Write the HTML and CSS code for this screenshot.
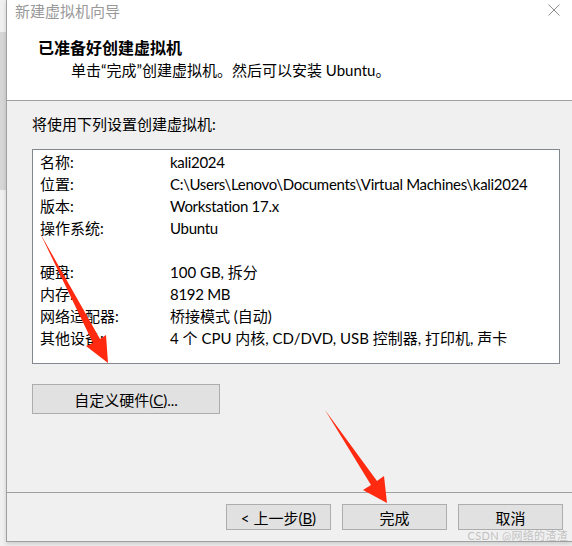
FILE: index.html
```html
<!DOCTYPE html>
<html lang="zh-CN">
<head>
    <meta charset="UTF-8">
    <title>新建虚拟机向导</title>
    <link rel="stylesheet" href="styles.css">
</head>
<body>

<div class="screen">
    <div class="side">
        <div class="side-bar"></div>
    </div>

    <div class="wizard">
        <div class="titlebar">
            <span class="title">新建虚拟机向导</span>
            <svg class="close" width="12" height="12" viewBox="0 0 12 12">
                <path d="M0.5 0.5 L11.5 11.5 M11.5 0.5 L0.5 11.5" stroke="#8a8a8a" stroke-width="1" fill="none"/>
            </svg>
        </div>

        <div class="header">
            <div class="header-title">已准备好创建虚拟机</div>
            <div class="header-sub">单击“完成”创建虚拟机。然后可以安装 Ubuntu。</div>
        </div>

        <div class="content">
            <div class="intro">将使用下列设置创建虚拟机:</div>
            <div class="summary">
                <div class="row"><span class="key">名称:</span><span class="latin">kali2024</span></div>
                <div class="row"><span class="key">位置:</span><span class="latin">C:\Users\Lenovo\Documents\Virtual Machines\kali2024</span></div>
                <div class="row"><span class="key">版本:</span><span class="latin">Workstation 17.x</span></div>
                <div class="row"><span class="key">操作系统:</span><span class="latin">Ubuntu</span></div>
                <div class="row"></div>
                <div class="row"><span class="key">硬盘:</span><span>100 GB, 拆分</span></div>
                <div class="row"><span class="key">内存:</span><span class="latin">8192 MB</span></div>
                <div class="row"><span class="key">网络适配器:</span><span>桥接模式 (自动)</span></div>
                <div class="row"><span class="key">其他设备:</span><span>4 个 CPU 内核, CD/DVD, USB 控制器, 打印机, 声卡</span></div>
            </div>
            <button class="btn btn-custom">自定义硬件(<u>C</u>)...</button>
        </div>

        <div class="footer">
            <button class="btn">&lt; 上一步(<u>B</u>)</button>
            <button class="btn">完成</button>
            <button class="btn">取消</button>
        </div>
    </div>
</div>

<svg class="arrows" width="572" height="546" viewBox="0 0 572 546">
    <polygon points="40,233 100,339 106,335 108,363 86,346 93,343" fill="#ff2a10"/>
    <polygon points="325,410 377,481 384,476 387,503 363,490 371,485" fill="#ff2a10"/>
</svg>

<div class="watermark">CSDN @网络的渣渣</div>

</body>
</html>
```

FILE: styles.css
```css
* {
    margin: 0;
    padding: 0;
    box-sizing: border-box;
}

body {
    width: 572px;
    height: 546px;
    overflow: hidden;
    background-color: #f0f0f0;
    font-family: Lato, "Noto Sans CJK SC", sans-serif;
    font-size: 15px;
    color: #000;
    position: relative;
}

.screen {
    display: flex;
    height: 546px;
}

/* strip of the window behind */
.side {
    width: 6px;
    flex-shrink: 0;
    padding-top: 32px;
}

.side-bar {
    height: 158px;
    background-color: #d6d6d6;
}

.wizard {
    flex: 1;
    height: 542px;
    border-left: 1px solid #a0a0a0;
    border-bottom: 1px solid #a0a0a0;
    background-color: #f0f0f0;
    box-shadow: 0 2px 4px rgba(0, 0, 0, 0.15);
    display: flex;
    flex-direction: column;
}

.titlebar {
    height: 30px;
    background-color: #fff;
    display: flex;
    align-items: flex-start;
    justify-content: space-between;
    padding: 1px 12px 0 8px;
}

.title {
    color: #999;
    line-height: 20px;
}

.close {
    margin-top: 3px;
}

.header {
    height: 71px;
    background-color: #fff;
    border-bottom: 1px solid #a0a0a0;
    padding: 7px 0 0 31px;
}

.header-title {
    font-weight: bold;
    font-size: 16px;
    line-height: 22px;
}

.header-sub {
    line-height: 22px;
    padding-left: 33px;
}

.content {
    height: 392px;
    border-bottom: 1px solid #a0a0a0;
    padding: 12px 0 0 25px;
}

.intro {
    line-height: 22px;
    margin-bottom: 14px;
}

.summary {
    width: 528px;
    height: 215px;
    background-color: #fff;
    border: 1px solid #828790;
    padding: 1px 0 0 7px;
}

.row {
    display: flex;
    height: 22px;
    line-height: 22px;
    white-space: nowrap;
}

.key {
    width: 130px;
    flex-shrink: 0;
}

/* latin-only values run a touch narrower in the original */
.latin {
    letter-spacing: -0.3px;
}

.btn {
    height: 26px;
    width: 105px;
    background-color: #e1e1e1;
    border: 1px solid #adadad;
    font-family: Lato, "Noto Sans CJK SC", sans-serif;
    font-size: 15px;
    color: #000;
}

.btn-custom {
    width: 188px;
    height: 30px;
    margin-top: 20px;
}

.footer {
    flex: 1;
    display: flex;
    justify-content: flex-end;
    gap: 11px;
    padding: 11px 9px 0 0;
}

.arrows {
    position: absolute;
    top: 0;
    left: 0;
    pointer-events: none;
}

.watermark {
    position: absolute;
    right: 4px;
    bottom: 3px;
    font-size: 11px;
    color: rgba(160, 160, 160, 0.6);
    letter-spacing: 0.3px;
}
```
